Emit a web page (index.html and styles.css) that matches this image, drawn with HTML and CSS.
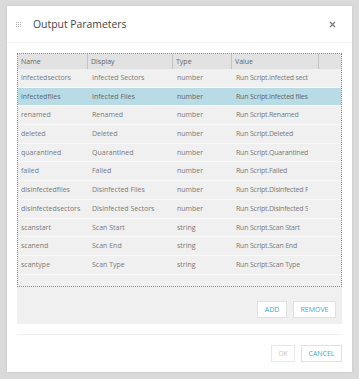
FILE: index.html
```html
<!DOCTYPE html>
<html>
    <head>
        <meta charset="utf-8">
        <title>Output Parameters</title>
        <meta name="viewport" content="width=device-width, initial-scale=1">
        <link rel="stylesheet" href="styles.css">
    </head>
    <body>
        <div class="dialog">
            <div class="dialog-header">
                <svg class="drag-handle" width="5" height="5" viewBox="0 0 5 5">
                    <rect x="0" y="0" width="1" height="1"/><rect x="2" y="0" width="1" height="1"/><rect x="4" y="0" width="1" height="1"/>
                    <rect x="0" y="2" width="1" height="1"/><rect x="2" y="2" width="1" height="1"/><rect x="4" y="2" width="1" height="1"/>
                    <rect x="0" y="4" width="1" height="1"/><rect x="2" y="4" width="1" height="1"/><rect x="4" y="4" width="1" height="1"/>
                </svg>
                <h1 class="dialog-title">Output Parameters</h1>
                <svg class="close-btn" width="7" height="7" viewBox="0 0 7 7">
                    <path d="M1 1 L6 6 M6 1 L1 6"/>
                </svg>
            </div>
            <div class="dialog-body">
                <div class="panel">
                    <div class="grid">
                        <div class="grid-head">
                            <div class="hcell">Name</div>
                            <div class="hcell">Display</div>
                            <div class="hcell">Type</div>
                            <div class="hcell">Value</div>
                            <div class="hcell"></div>
                        </div>
                        <div class="row"><span>infectedsectors</span><span>Infected Sectors</span><span>number</span><span class="val">Run Script.Infected sectors</span></div>
                        <div class="row selected"><span>infectedfiles</span><span>Infected Files</span><span>number</span><span class="val">Run Script.Infected files</span></div>
                        <div class="row"><span>renamed</span><span>Renamed</span><span>number</span><span class="val">Run Script.Renamed</span></div>
                        <div class="row"><span>deleted</span><span>Deleted</span><span>number</span><span class="val">Run Script.Deleted</span></div>
                        <div class="row"><span>quarantined</span><span>Quarantined</span><span>number</span><span class="val">Run Script.Quarantined</span></div>
                        <div class="row"><span>failed</span><span>Failed</span><span>number</span><span class="val">Run Script.Failed</span></div>
                        <div class="row"><span>disinfectedfiles</span><span>Disinfected Files</span><span>number</span><span class="val">Run Script.Disinfected Files</span></div>
                        <div class="row"><span>disinfectedsectors</span><span>Disinfected Sectors</span><span>number</span><span class="val">Run Script.Disinfected Sectors</span></div>
                        <div class="row"><span>scanstart</span><span>Scan Start</span><span>string</span><span class="val">Run Script.Scan Start</span></div>
                        <div class="row"><span>scanend</span><span>Scan End</span><span>string</span><span class="val">Run Script.Scan End</span></div>
                        <div class="row"><span>scantype</span><span>Scan Type</span><span>string</span><span class="val">Run Script.Scan Type</span></div>
                    </div>
                    <div class="panel-actions">
                        <button class="btn btn-add">ADD</button>
                        <button class="btn btn-remove">REMOVE</button>
                    </div>
                </div>
                <div class="divider"></div>
                <div class="dialog-footer">
                    <button class="btn btn-ok" disabled>OK</button>
                    <button class="btn btn-cancel">CANCEL</button>
                </div>
            </div>
        </div>
    </body>
</html>
```
FILE: styles.css
```css
*{
    margin: 0;
    padding: 0;
    box-sizing: border-box;
}
body{
    background-color: #dadada;
    font-family: "Open Sans", "DejaVu Sans", sans-serif;
    padding: 6px 0 0 7px;
    height: 379px;
    overflow: hidden;
}
.dialog{
    width: 345px;
    height: 366px;
    background-color: #fff;
    box-shadow: 0 0 2px rgba(0,0,0,.12);
}
.dialog-header{
    height: 37px;
    display: flex;
    align-items: center;
    padding: 0 16px 0 9px;
    border-bottom: 1px solid #f2f2f2;
}
.drag-handle{
    fill: #b0b0b0;
    margin-right: 12px;
}
.dialog-title{
    flex: 1;
    font-size: 10.4px;
    font-weight: normal;
    color: #444;
    margin-top: -1px;
}
.close-btn{
    stroke: #777;
    stroke-width: 1.1;
}
.dialog-body{
    padding: 10px 10px 0;
}
.panel{
    background-color: #f0f0f0;
    height: 271px;
}
.grid{
    height: 234px;
    border: 1px dotted #8a8a8a;
}
.grid-head{
    display: grid;
    grid-template-columns: 70px 85px 59px 87px 1fr;
    height: 15px;
    background-color: #e2e2e2;
}
.hcell{
    font-size: 7px;
    color: #666;
    line-height: 15px;
    padding-left: 3px;
    border-right: 1px solid #c4c4c4;
}
.hcell:last-child{
    border-right: none;
}
.row{
    display: grid;
    grid-template-columns: 71px 85px 59px 1fr;
    height: 18.7px;
    border-bottom: 1px solid #f8f8f8;
    font-size: 7px;
    color: #7a7a7a;
    line-height: 18px;
}
.row span{
    padding-left: 3px;
    white-space: nowrap;
    overflow: hidden;
}
.row .val{
    max-width: 75px;
    letter-spacing: -0.2px;
}
.row.selected{
    background-color: #b8dbe5;
    color: #5a6a70;
}
.panel-actions{
    display: flex;
    justify-content: flex-end;
    gap: 6px;
    padding: 14px 6px 0 0;
}
.btn{
    height: 17px;
    background-color: #fff;
    border: 1px solid #e0e0e0;
    font-family: "Open Sans", "DejaVu Sans", sans-serif;
    font-size: 7px;
    color: #4aa3c8;
    padding: 0 6px;
}
.btn-add{
    width: 30px;
}
.btn-remove{
    width: 43px;
}
.divider{
    height: 1px;
    background-color: #efefef;
    margin-top: 10px;
}
.dialog-footer{
    display: flex;
    justify-content: flex-end;
    gap: 6px;
    padding-top: 10px;
}
.btn-ok{
    width: 24px;
    color: #c8c8c8;
    border-color: #e8e8e8;
}
.btn-cancel{
    width: 41px;
}
```
